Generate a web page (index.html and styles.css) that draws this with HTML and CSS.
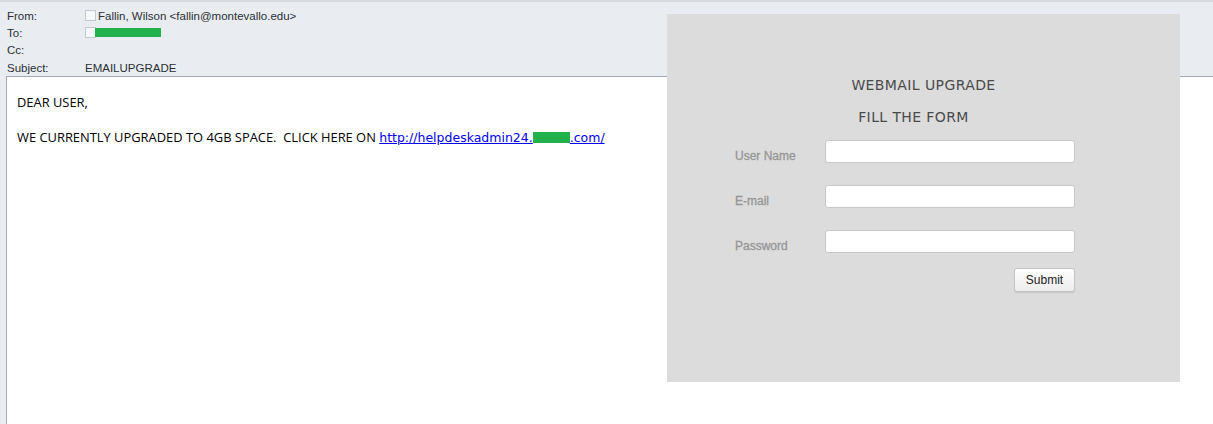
FILE: index.html
```html
<!DOCTYPE html>
<html lang="en">
<head>
  <meta charset="UTF-8" />
  <title>EMAILUPGRADE</title>
  <link rel="stylesheet" href="styles.css">
</head>
<body>
  <div class="reader">
    <div class="headers">
      <div class="row">
        <span class="label">From:</span>
        <span class="value"><span class="check"></span>Fallin, Wilson &lt;fallin@montevallo.edu&gt;</span>
      </div>
      <div class="row">
        <span class="label">To:</span>
        <span class="value"><span class="check"></span><span class="mask to-mask"></span></span>
      </div>
      <div class="row">
        <span class="label">Cc:</span>
        <span class="value"></span>
      </div>
      <div class="row">
        <span class="label">Subject:</span>
        <span class="value">EMAILUPGRADE</span>
      </div>
    </div>
    <div class="message">
      <p>DEAR USER,</p>
      <p>WE CURRENTLY UPGRADED TO 4GB SPACE.&nbsp; CLICK HERE ON <a href="#" class="link">http://helpdeskadmin24.<span class="mask link-mask"></span>.com/</a></p>
    </div>
  </div>

  <div class="panel">
    <h2>WEBMAIL UPGRADE</h2>
    <h2 class="sub">FILL THE FORM</h2>
    <form class="upgrade-form">
      <label for="user">User Name</label>
      <input type="text" id="user" />
      <label for="mail">E-mail</label>
      <input type="text" id="mail" />
      <label for="pass">Password</label>
      <input type="password" id="pass" />
      <button type="submit">Submit</button>
    </form>
  </div>
</body>
</html>
```

FILE: styles.css
```css
body {
  margin: 0;
  background: #fff;
  height: 424px;
  overflow: hidden;
  position: relative;
}
.reader {
  height: 424px;
  background-color: #e9edf2;
  border-top: 2px solid #d6dade;
  box-sizing: border-box;
  display: flex;
  flex-direction: column;
}
.headers {
  height: 74px;
  padding: 5px 0 0 7px;
  box-sizing: border-box;
  font-family: 'Liberation Sans', Arial, sans-serif;
  font-size: 11.5px;
  color: #2b2f36;
}
.row {
  display: flex;
  height: 17.33px;
  align-items: center;
}
.label {
  width: 78px;
}
.value {
  display: flex;
  align-items: center;
}
.check {
  width: 9px;
  height: 9px;
  border: 1px solid #c4c8cc;
  background: #f6f7f8;
  margin: 0 2px 0 0;
}
.mask {
  display: inline-block;
  background-color: #22b14c;
}
.to-mask {
  width: 66px;
  height: 9px;
  margin-left: -3px;
}
.message {
  flex-grow: 1;
  margin-left: 6px;
  background: white;
  border-top: 1px solid #a4abb3;
  border-left: 1px solid #a4abb3;
  padding: 16px 10px;
  font-family: 'Open Sans', sans-serif;
  font-size: 12.9px;
  color: #000;
}
.message p {
  margin: 0 0 17px;
  line-height: 18px;
}
.link {
  color: #0000ee;
  font-family: 'DejaVu Sans', Verdana, sans-serif;
  font-size: 12.5px;
}
.link-mask {
  width: 37px;
  height: 11px;
  vertical-align: -1px;
}
.panel {
  position: absolute;
  left: 667px;
  top: 14px;
  width: 513px;
  height: 368px;
  background-color: #dcdcdc;
  box-sizing: border-box;
  padding-top: 62px;
}
.panel h2 {
  margin: 0 0 14px;
  text-align: center;
  font-family: 'DejaVu Sans', sans-serif;
  font-weight: normal;
  font-size: 14px;
  letter-spacing: 0.4px;
  color: #4a4a4a;
  line-height: 18px;
}
.panel h2.sub {
  padding-right: 20px;
}
.upgrade-form {
  margin: 13px 0 0 68px;
  width: 340px;
  display: grid;
  grid-template-columns: 90px 250px;
  row-gap: 22px;
  align-items: center;
}
.upgrade-form label {
  font-family: 'Liberation Sans', Arial, sans-serif;
  font-size: 12px;
  color: #969696;
  padding-top: 8px;
  -webkit-text-stroke: 0.3px #969696;
}
.upgrade-form input {
  height: 23px;
  box-sizing: border-box;
  border: 1px solid #c8c8c8;
  border-radius: 3px;
  background: white;
}
.upgrade-form button {
  grid-column: 2;
  justify-self: end;
  margin-top: -7px;
  width: 61px;
  height: 24px;
  font-family: 'Liberation Sans', Arial, sans-serif;
  font-size: 12px;
  color: #222;
  background: linear-gradient(#ffffff, #ececec);
  border: 1px solid #c4c4c4;
  border-radius: 3px;
  box-shadow: 0 1px 1px rgb(0 0 0 / 0.1);
}
```
